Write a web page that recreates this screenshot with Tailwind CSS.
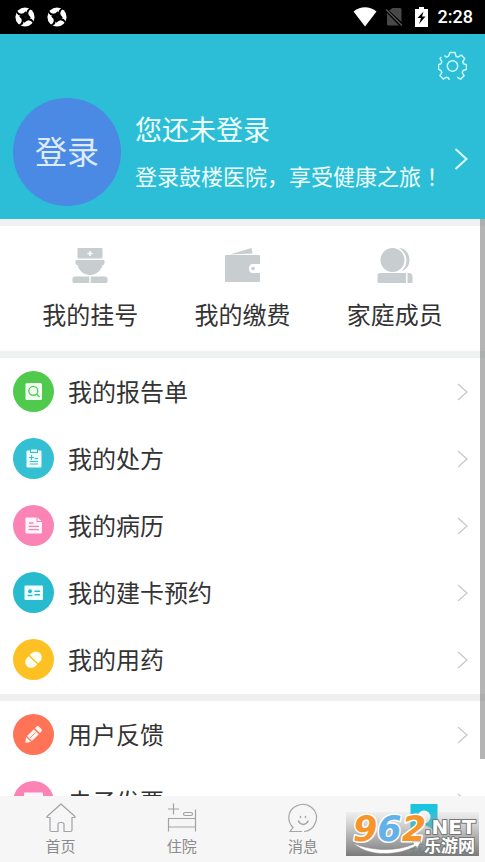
<!DOCTYPE html>
<html lang="zh-CN">
<head>
<meta charset="utf-8">
<meta name="viewport" content="width=device-width, initial-scale=1">
<title>我的</title>
<script src="https://cdn.jsdelivr.net/npm/@tailwindcss/browser@4"></script>
</head>
<body class="flex h-screen flex-col overflow-hidden bg-white font-['Noto_Sans_CJK_SC',sans-serif] text-[#333]">

<!-- Status bar -->
<div class="flex h-[34px] shrink-0 items-center bg-black pr-3 pl-[15px] text-white">
  <svg class="size-5" viewBox="0 0 20 20" aria-hidden="true"><circle cx="10" cy="10" r="9.6" fill="#fff"/><g fill="#000"><path id="b" d="M10 10L13.500 7Q11.500 6.300 10.500 4.200 8.500 6.800 6.300 6.800 3.500 6.500 2 3.800L1 5.500Q3 8.800 6 9z"/><use href="#b" transform="rotate(90 10 10)"/><use href="#b" transform="rotate(180 10 10)"/><use href="#b" transform="rotate(270 10 10)"/></g></svg>
  <svg class="ml-3 size-5" viewBox="0 0 20 20" aria-hidden="true"><circle cx="10" cy="10" r="9.600" fill="#fff"/><g fill="#000"><use href="#b"/><use href="#b" transform="rotate(90 10 10)"/><use href="#b" transform="rotate(180 10 10)"/><use href="#b" transform="rotate(270 10 10)"/></g></svg>
  <svg class="ml-auto h-5 w-6" viewBox="0 0 24 20" fill="#fff" aria-hidden="true"><path d="M.5 4.500Q12-3.800 23.500 4.500L12 19.500z"/></svg>
  <svg class="ml-2 h-5 w-[18px]" viewBox="0 0 18 20" aria-hidden="true"><path d="M7.500 1H15q1.500 0 1.500 1.500V15L4 3.500zM2 6l12 12.500H3.500Q2 18.500 2 17z" fill="#484848"/><path d="M1 2.500l16 16" stroke="#555" stroke-width="1.400"/></svg>
  <svg class="ml-3 h-5 w-[13px]" viewBox="0 0 13 20" aria-hidden="true"><path d="M4 0h5v2h4v18H0V2h4z" fill="#fff"/><path d="M8.500 4.500L2.500 11H6l-2 6 6.500-7.500H7z" fill="#000"/></svg>
  <span class="ml-[10px] font-[Roboto,sans-serif] text-[18px] leading-6 font-medium">2:28</span>
</div>

<main class="relative min-h-0 flex-1 overflow-hidden">
  <!-- Account header -->
  <header class="flex h-[185px] flex-col bg-[#2bbed6] text-[#f0ffff]">
    <button type="button" aria-label="设置" class="mt-[17px] mr-[18px] size-[29px] self-end">
      <svg viewBox="0 0 29 29" fill="none" stroke="#c9fbff" stroke-width="1.500" aria-hidden="true"><circle cx="14.500" cy="15" r="5.200"/><path stroke-dasharray="52 4 44 4" d="M12 1.500h5l1 3.700 2 .9 3.300-2 3.400 3.500-2 3.200.8 2 3 .9v4.800l-3.400 1-.9 2.100 1.900 3.200-3.500 3.300-3.200-1.800-2 .8-1 3.400h-4.800l-1-3.500-2.100-.8-3.200 1.800-3.300-3.300 1.800-3.200-.9-2.100-2.400-1v-4.600l2.400-1.100.9-2-1.800-3.200 3.300-3.400 3.200 1.900 2.100-.9z" stroke-linejoin="round"/></svg>
    </button>
    <a href="#login" class="mt-[18px] flex items-center pr-[17px] pl-[13px]">
      <span class="flex size-[108px] shrink-0 items-center justify-center rounded-full bg-[#4a8ae4] pb-1 text-[32px] leading-10 text-[#deebff]">登录</span>
      <span class="ml-[14px] flex flex-col gap-2 whitespace-nowrap">
        <span class="text-[27px] leading-[38px]">您还未登录</span>
        <span class="text-[22px] leading-[38px]">登录鼓楼医院，享受健康之旅<span class="font-['Noto_Sans_CJK_TC',sans-serif]" lang="zh-TW">！</span></span>
      </span>
      <svg class="mt-[14px] ml-auto h-6 w-[14px] shrink-0" viewBox="0 0 14 24" fill="none" stroke="#d8ffff" stroke-width="2" aria-hidden="true"><path d="M1.500 2l11 10-11 10"/></svg>
    </a>
  </header>

  <!-- Shortcuts -->
  <section class="grid grid-cols-3 border-y-[7px] border-[#f0f1f1] px-[14px] pt-5 pb-[19px] text-center text-[24px] leading-9">
    <a href="#register" class="flex flex-col items-center gap-[10px]">
      <svg class="h-10 w-9" viewBox="0 0 36 40" fill="#c8cdcf" aria-hidden="true"><rect x="5.500" y="2" width="25" height="10.500" rx="1"/><path d="M4 14h28q1.500 3-.5 5h-1c-1.500 6-6.500 10-12.500 10S7 25 5.500 19h-1q-2-2-.5-5z"/><path d="M3 30.500h14.300V37H2q-1.500 0-1.500-1.500v-2.500q0-2.500 2.500-2.500zM18.700 30.500H33q2.500 0 2.500 2.500v2.500q0 1.500-1.500 1.500H18.700z"/><path d="M18 5v5M15.500 7.500h5" stroke="#fff" stroke-width="1.500"/></svg>
      <span>我的挂号</span>
    </a>
    <a href="#payment" class="flex flex-col items-center gap-[10px]">
      <svg class="h-10 w-9" viewBox="0 0 36 40" fill="#c8cdcf" aria-hidden="true"><path d="M6 8.500L27.500 2l1 5.500zM2 9h33q1 0 1 1v8h-7q-4 0-4 4.500t4 4.500h7v8q0 1-1 1H2q-1 0-1-1V10q0-1 1-1z"/><circle cx="29" cy="22.500" r="1.800"/></svg>
      <span>我的缴费</span>
    </a>
    <a href="#family" class="flex flex-col items-center gap-[10px]">
      <svg class="h-10 w-9" viewBox="0 0 36 40" fill="#c8cdcf" aria-hidden="true"><circle cx="15.500" cy="14" r="12"/><path d="M22 2c13 1 14 20 2.500 23 7-6 7-17-2.500-23z"/><path d="M3 27h26v10H2q-1.500 0-1.500-1.500v-6Q.5 27 3 27zM30.500 27h1.500q3.500 0 3.500 3.500V37h-5z"/></svg>
      <span>家庭成员</span>
    </a>
  </section>

  <!-- Records -->
  <ul class="pb-px text-[24px] leading-9">
    <li><a href="#reports" class="flex h-[67px] items-center pr-[17px] pl-[13px]">
      <svg class="mr-[14px] size-[41px]" viewBox="0 0 41 41" aria-hidden="true"><circle cx="20.500" cy="20.500" r="20.500" fill="#4fca4d"/><rect x="12.500" y="12" width="16.500" height="17" rx="1.500" fill="#f3fff3"/><g fill="none" stroke="#4fca4d" stroke-width="1.300"><circle cx="20.300" cy="19.800" r="4.500"/><path d="M23.500 23l3 3"/></g></svg>
      <span class="pb-0.5">我的报告单</span>
      <svg class="ml-auto h-[18px] w-[11px]" viewBox="0 0 11 18" fill="none" stroke="#c8c8cc" stroke-width="1.300" aria-hidden="true"><path d="M1 1l9 8-9 8"/></svg></a></li>
    <li><a href="#prescriptions" class="flex h-[67px] items-center pr-[17px] pl-[13px]">
      <svg class="mr-[14px] size-[41px]" viewBox="0 0 41 41" aria-hidden="true"><circle cx="20.500" cy="20.500" r="20.500" fill="#34bfd3"/><path d="M14.500 12.500h2.500V15h8v-2.500h2.500q1 0 1 1v15q0 1-1 1h-13q-1 0-1-1v-15q0-1 1-1z" fill="#f2ffff"/><path d="M18 11.500h6v2.300h-6z" fill="#f2ffff"/><path d="M18.500 17v5M16 19.500h5M21.500 20.500h3.500M16.500 23.500H25M16.500 26H25" stroke="#34bfd3" stroke-width="1.100"/></svg>
      <span class="pb-0.5">我的处方</span>
      <svg class="ml-auto h-[18px] w-[11px]" viewBox="0 0 11 18" fill="none" stroke="#c8c8cc" stroke-width="1.300" aria-hidden="true"><path d="M1 1l9 8-9 8"/></svg></a></li>
    <li><a href="#history" class="flex h-[67px] items-center pr-[17px] pl-[13px]">
      <svg class="mr-[14px] size-[41px]" viewBox="0 0 41 41" aria-hidden="true"><circle cx="20.500" cy="20.500" r="20.500" fill="#fb83b5"/><path d="M13 12.500h10.500V17H29v10.500q0 1-1 1H13.500q-1 0-1-1V13zM24.500 12.500l4 3.500h-4z" fill="#fff5fa"/><path d="M16 18h4.500M15.500 21.300H26M15.500 24.700H26" stroke="#fb83b5" stroke-width="1.300"/></svg>
      <span class="pb-0.5">我的病历</span>
      <svg class="ml-auto h-[18px] w-[11px]" viewBox="0 0 11 18" fill="none" stroke="#c8c8cc" stroke-width="1.300" aria-hidden="true"><path d="M1 1l9 8-9 8"/></svg></a></li>
    <li><a href="#cards" class="flex h-[67px] items-center pr-[17px] pl-[13px]">
      <svg class="mr-[14px] size-[41px]" viewBox="0 0 41 41" aria-hidden="true"><circle cx="20.500" cy="20.500" r="20.500" fill="#28bbd0"/><rect x="11.500" y="13.500" width="18.500" height="14.500" rx="1" fill="#f2ffff"/><circle cx="17" cy="19.200" r="2" fill="#28bbd0"/><path d="M14.500 23.500h5M21.500 19.200h5.500M21.500 22.800h5.500" stroke="#28bbd0" stroke-width="1.500"/></svg>
      <span class="pb-0.5">我的建卡预约</span>
      <svg class="ml-auto h-[18px] w-[11px]" viewBox="0 0 11 18" fill="none" stroke="#c8c8cc" stroke-width="1.300" aria-hidden="true"><path d="M1 1l9 8-9 8"/></svg></a></li>
    <li><a href="#medicine" class="flex h-[67px] items-center pr-[17px] pl-[13px]">
      <svg class="mr-[14px] size-[41px]" viewBox="0 0 41 41" aria-hidden="true"><circle cx="20.500" cy="20.500" r="20.500" fill="#fec124"/><rect x="11.200" y="14.800" width="18.600" height="11.800" rx="5.900" fill="#fffdf0" transform="rotate(-45 20.500 20.700)"/><path d="M15 15.500l11 10.500" stroke="#fec124" stroke-width="1.500"/></svg>
      <span class="pb-0.5">我的用药</span>
      <svg class="ml-auto h-[18px] w-[11px]" viewBox="0 0 11 18" fill="none" stroke="#c8c8cc" stroke-width="1.300" aria-hidden="true"><path d="M1 1l9 8-9 8"/></svg></a></li>
  </ul>
  <ul class="border-t-[7px] border-[#f0f0f0] text-[24px] leading-9">
    <li><a href="#feedback" class="flex h-[67px] items-center pr-[17px] pl-[13px]">
      <svg class="mr-[14px] size-[41px]" viewBox="0 0 41 41" aria-hidden="true"><circle cx="20.500" cy="20.500" r="20.500" fill="#ff7357"/><g fill="#fff6f2" transform="rotate(-45 20.500 20.500)"><path d="M14.800 17h9.700v7h-9.700zM26 17h2q2 0 2 2v3q0 2-2 2h-2zM13.500 17v7L9 20.500z"/><path d="M15.500 20.500h8" stroke="#ff7357" stroke-width=".8"/></g></svg>
      <span class="pb-0.5">用户反馈</span>
      <svg class="ml-auto h-[18px] w-[11px]" viewBox="0 0 11 18" fill="none" stroke="#c8c8cc" stroke-width="1.300" aria-hidden="true"><path d="M1 1l9 8-9 8"/></svg></a></li>
    <li><a href="#invoices" class="flex h-[67px] items-center pr-[17px] pl-[13px]">
      <svg class="mr-[14px] size-[41px]" viewBox="0 0 41 41" aria-hidden="true"><circle cx="20.500" cy="20.500" r="20.500" fill="#fb83b5"/><rect x="11" y="11.500" width="19" height="17" rx="1" fill="#fff5fa"/></svg>
      <span class="pb-0.5">电子发票</span>
      <svg class="ml-auto h-[18px] w-[11px]" viewBox="0 0 11 18" fill="none" stroke="#c8c8cc" stroke-width="1.300" aria-hidden="true"><path d="M1 1l9 8-9 8"/></svg></a></li>
  </ul>

  <!-- Scroll indicator -->
  <div class="absolute top-[185px] right-0 bottom-[37px] w-[5px] bg-[#777]/55"></div>
</main>

<!-- Tab bar -->
<nav class="relative grid h-[66px] shrink-0 grid-cols-4 bg-[#f6f6f6] pt-[6px] text-center text-[15px] leading-5 text-[#8b8b8b]">
  <a href="#home" class="flex flex-col items-center gap-0.5">
    <svg class="size-8" viewBox="0 0 32 32" fill="none" stroke="#a0a4a7" stroke-width="1.200" stroke-linejoin="round" aria-hidden="true"><path d="M16 2L2 14.500v1h3V28q0 1.500 1.500 1.500H13V22q0-1.500 3-1.500t3 1.500v7.500h6.500q1.500 0 1.500-1.500V15.500h3v-1z"/></svg>
    <span>首页</span>
  </a>
  <a href="#inpatient" class="flex flex-col items-center gap-0.5">
    <svg class="size-8" viewBox="0 0 32 32" fill="none" stroke="#a0a4a7" stroke-width="1.200" aria-hidden="true"><path d="M7.500 1.500v11M2 7h11M2.500 29.500v-13h27M29.500 7.500v22M2.500 25h27"/><rect x="17.500" y="10.500" width="9" height="3" rx="1.500"/></svg>
    <span>住院</span>
  </a>
  <a href="#messages" class="flex flex-col items-center gap-0.5">
    <svg class="size-8" viewBox="0 0 32 32" fill="none" stroke="#a6a6a6" stroke-width="1.200" stroke-linecap="round" aria-hidden="true"><path d="M14.500 29.500H3l3-4C-.5 19 1 9 7.500 5c12-8 26 3.500 21 15.500-2 5.500-6.500 8.500-11 9"/><path d="M13.500 14.500v1M18.500 14.500v1M11.500 19c2 4.500 7.500 4.500 9.500 0" stroke-width="1.500"/></svg>
    <span>消息</span>
  </a>
  <a href="#me" class="flex flex-col items-center gap-0.5 text-[#1cb4c8]" aria-current="page">
    <svg class="size-8" viewBox="0 0 32 32" aria-hidden="true"><rect x="2.500" y="2" width="27" height="28" fill="#1cc4dd"/><circle cx="16" cy="15" r="6.500" fill="#fff"/><path d="M5 30q11-13 22 0z" fill="#fff"/></svg>
    <span>我的</span>
  </a>

  <!-- Site badge over the last tab -->
  <svg class="absolute right-[6px] bottom-[6px] h-[44px] w-[133px]" viewBox="0 0 133 44" role="img" aria-label="962.NET 乐游网">
    <defs><linearGradient id="g" x2="0" y2="1"><stop offset="0" stop-color="#aaa" stop-opacity=".1"/><stop offset=".5" stop-color="#959595" stop-opacity=".65"/><stop offset="1" stop-color="#737373" stop-opacity=".95"/></linearGradient></defs>
    <path d="M0 0h133v44H0z" fill="url(#g)"/>
    <g font-family="DejaVu Sans" font-weight="700" stroke="#fff" stroke-linejoin="round" paint-order="stroke">
      <text x="7" y="29" font-size="35" font-style="italic" stroke-width="3" fill="#f7942a">9<tspan fill="#62b1e8">6</tspan>2</text>
      <text x="78" y="22" font-size="20" stroke="#777" stroke-width="2" fill="#fff">.NET</text>
      <text x="78" y="40" font-family="Noto Sans CJK SC" font-size="17" stroke="#777" stroke-width="2" fill="#fff">乐游网</text>
    </g>
    <path d="M7 31c18 8 42 9 61 1l-2-2 9-.5-4 7-1-2.500C49 45 21 44 7 31z" fill="#fff" stroke="#888" stroke-width=".5"/>
  </svg>
</nav>
</body>
</html>
